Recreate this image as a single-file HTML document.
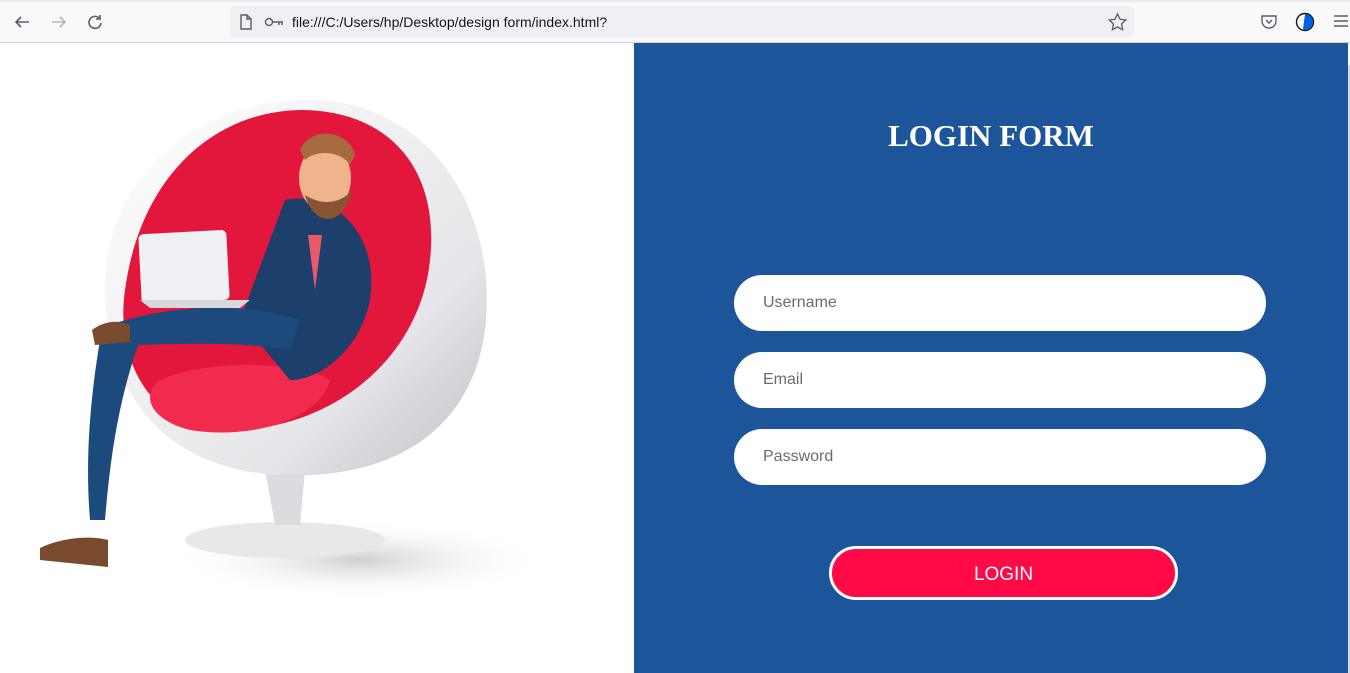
<!DOCTYPE html>
<html><head><meta charset="utf-8"><style>
*{margin:0;padding:0;box-sizing:border-box}
body{width:1350px;height:673px;overflow:hidden;background:#fff;font-family:"Liberation Sans",sans-serif;position:relative}
.bar{position:absolute;left:0;top:0;width:1350px;height:43px;background:#f9f9fb;border-bottom:1px solid #d0d0d4}
.bar:before{content:"";position:absolute;left:0;top:0;width:1350px;height:2px;background:#eaeaee}
.url{position:absolute;left:230px;top:6px;width:904px;height:32px;background:#f0f0f4;border-radius:5px}
.url span{position:absolute;left:62px;top:8px;font-size:14px;color:#15141a}
.ico{position:absolute;color:#5b5b66}
.right{position:absolute;left:634px;top:43px;width:714px;height:630px;background:#1d559b}
.sb{position:absolute;left:1348px;top:65px;width:2px;height:608px;background:#d8d8d8}
h1{position:absolute;left:0;width:714px;top:75px;text-align:center;font-family:"Liberation Serif",serif;font-size:31px;font-weight:bold;color:#fff;padding-left:0}
.in{position:absolute;left:100px;width:532px;height:56px;background:#fff;border-radius:28px;font-family:"Liberation Sans",sans-serif;font-size:16px;color:#6b6b6b;padding:19px 0 0 29px}
.btn{position:absolute;left:195px;top:503px;width:349px;height:54px;background:#ff0a47;border:3px solid #fff;border-radius:27px;color:#fff;font-family:"Liberation Sans",sans-serif;font-size:19px;text-align:center;line-height:52px}
</style></head><body>
<div class="bar">
<svg class="ico" style="left:13px;top:13px" width="18" height="18" viewBox="0 0 18 18" fill="none" stroke="#5b5b66" stroke-width="1.6"><path d="M16 9H3M8 4L3 9l5 5"/></svg>
<svg class="ico" style="left:50px;top:13px" width="18" height="18" viewBox="0 0 18 18" fill="none" stroke="#b5b5bb" stroke-width="1.6"><path d="M2 9h13M10 4l5 5-5 5"/></svg>
<svg class="ico" style="left:86px;top:13px" width="18" height="18" viewBox="0 0 18 18" fill="none" stroke="#5b5b66" stroke-width="1.6"><path d="M14 6A6 6 0 1 0 15 10M14 2v4h-4"/></svg>
<div class="url">
<svg style="position:absolute;left:9px;top:8px" width="14" height="16" viewBox="0 0 14 16" fill="none" stroke="#5b5b66" stroke-width="1.4"><path d="M2 1h6l4 4v10H2zM8 1v4h4"/></svg>
<svg style="position:absolute;left:34px;top:11px" width="20" height="10" viewBox="0 0 20 10" fill="none" stroke="#5b5b66" stroke-width="1.4"><circle cx="5" cy="5" r="3.5"/><path d="M9 5h10M15 5v3M18 5v3"/></svg>
<span>file:///C:/Users/hp/Desktop/design form/index.html?</span>
<svg style="position:absolute;left:878px;top:7px" width="19" height="18" viewBox="0 0 20 19" fill="none" stroke="#5b5b66" stroke-width="1.4"><path d="M10 1l2.7 5.6 6 .8-4.4 4.2 1.1 6L10 14.8 4.6 17.6l1.1-6L1.3 7.4l6-.8z"/></svg>
</div>
<svg style="position:absolute;left:1261px;top:14px" width="16" height="15" viewBox="0 0 16 15" fill="none" stroke="#5b5b66" stroke-width="1.4"><path d="M1 2h14v5a7 7 0 0 1-14 0z"/><path d="M5 6l3 3 3-3"/></svg>
<svg style="position:absolute;left:1295px;top:12px" width="20" height="20" viewBox="0 0 20 20"><circle cx="10" cy="10" r="8.5" fill="#fff" stroke="#15141a" stroke-width="1.4"/><path d="M10 2a8 8 0 0 1 0 16L8 17z" fill="#0061e0"/></svg>
<svg style="position:absolute;left:1333px;top:14px" width="16" height="14" viewBox="0 0 16 14" stroke="#5b5b66" stroke-width="1.4"><path d="M1 2h14M1 7h14M1 12h14"/></svg>
</div>

<svg style="position:absolute;left:0;top:43px" width="634" height="630" viewBox="0 43 634 630">
<defs>
<radialGradient id="sh" cx="0.5" cy="0.5" r="0.5"><stop offset="0" stop-color="#bbb" stop-opacity=".7"/><stop offset="1" stop-color="#fff" stop-opacity="0"/></radialGradient>
<linearGradient id="shell" x1="0" y1="0" x2="1" y2="1"><stop offset="0" stop-color="#fff"/><stop offset=".7" stop-color="#e6e6ea"/><stop offset="1" stop-color="#bfbfc4"/></linearGradient>
</defs>
<ellipse cx="360" cy="560" rx="190" ry="40" fill="url(#sh)"/>
<ellipse cx="285" cy="540" rx="100" ry="18" fill="#e8e8ea"/>
<path d="M265 470 L305 470 L300 525 L275 525z" fill="#dcdce0"/>
<path d="M300 100 C420 95 500 200 485 330 C470 440 380 480 280 475 C170 470 110 400 105 300 C100 180 190 105 300 100z" fill="url(#shell)"/>
<path d="M300 110 C390 110 440 170 430 260 C420 360 330 430 230 430 C150 430 115 360 125 290 C140 180 210 112 300 110z" fill="#e3163b"/>
<path d="M160 380 C200 360 300 360 330 380 C320 420 250 440 190 430 C150 420 140 395 160 380z" fill="#f02b4d"/>
<path d="M285 200 C330 190 380 230 370 300 C360 350 320 380 290 380 L240 320 z" fill="#1c3f6b"/>
<path d="M95 330 C160 305 240 300 300 320 L290 350 C230 340 170 345 120 345z" fill="#1d4a7d"/>
<path d="M100 340 C90 400 85 460 90 520 L105 520 C110 460 118 400 140 340z" fill="#1d4a7d"/>
<path d="M40 548 C60 538 90 535 108 540 L108 567 L40 560z" fill="#7a4a2e"/>
<path d="M92 330 C105 320 120 320 130 325 L130 342 L95 345z" fill="#7a4a2e"/>
<rect x="140" y="232" width="88" height="70" rx="5" fill="#eef0f3" transform="rotate(-3 184 267)"/>
<path d="M140 300 L250 300 L240 308 L150 308z" fill="#d6d8dc"/>
<ellipse cx="325" cy="178" rx="26" ry="34" fill="#f0b48c"/>
<path d="M300 150 C310 125 350 130 355 155 L350 165 C340 150 315 150 305 160z" fill="#a66a3e"/>
<path d="M305 195 C315 230 345 225 352 190 C340 205 320 205 305 195z" fill="#8a5432"/>
<path d="M308 235 L322 235 L315 290z" fill="#e85a6a"/>
</svg>

<div class="right">
<h1>LOGIN FORM</h1>
<div class="in" style="top:232px">Username</div>
<div class="in" style="top:309px">Email</div>
<div class="in" style="top:386px">Password</div>
<div class="btn">LOGIN</div>
</div>
<div class="sb"></div>
</body></html>
